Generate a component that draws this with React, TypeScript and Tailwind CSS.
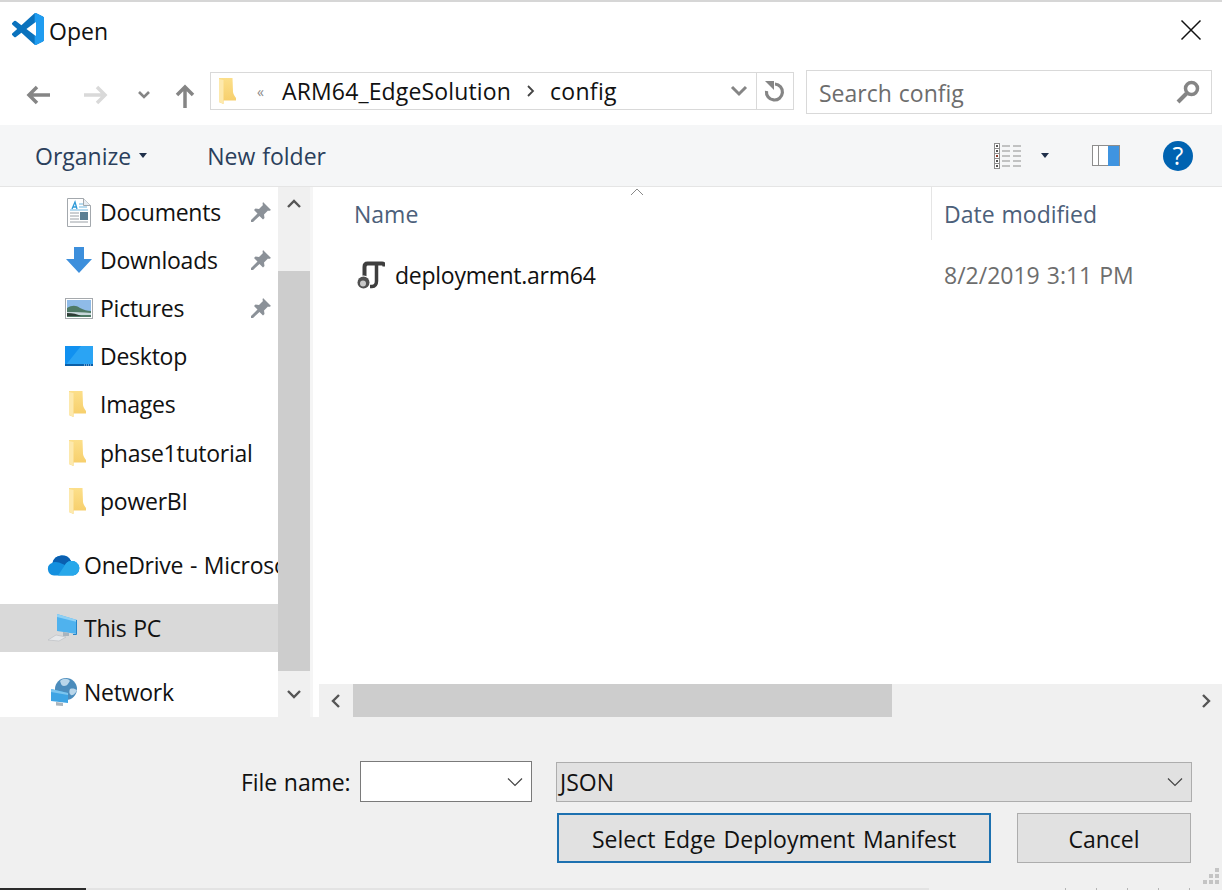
import React from 'react';

const font = { fontFamily: '"Open Sans", "Noto Sans", sans-serif' };

function VsCodeLogo() {
  const d =
    'M23.15 2.587L18.21.21a1.494 1.494 0 0 0-1.705.29l-9.46 8.63-4.12-3.128a.999.999 0 0 0-1.276.057L.327 7.261A1 1 0 0 0 .326 8.74L3.899 12 .326 15.26a1 1 0 0 0 .001 1.479L1.65 17.94a.999.999 0 0 0 1.276.057l4.12-3.128 9.46 8.63a1.492 1.492 0 0 0 1.704.29l4.942-2.377A1.5 1.5 0 0 0 24 20.06V3.939a1.5 1.5 0 0 0-.85-1.352zm-5.146 14.861L10.826 12l7.178-5.448v10.896z';
  return (
    <svg width="32" height="32" viewBox="0 0 24 24" className="shrink-0">
      <defs>
        <clipPath id="vs-right">
          <path d="M17 0h7v24h-7z" />
        </clipPath>
      </defs>
      <path d={d} fill="#0a72bd" />
      <path d={d} fill="#1f9cf0" clipPath="url(#vs-right)" />
    </svg>
  );
}

function Folder() {
  return (
    <svg width="18" height="26" viewBox="0 0 18 26" className="shrink-0">
      <defs>
        <linearGradient id="folder-body" x1="0" y1="0" x2="0" y2="1">
          <stop offset="0" stopColor="#fcdf8a" />
          <stop offset="1" stopColor="#f6cd68" />
        </linearGradient>
      </defs>
      <path d="M1 0h13.500l.5 14c.3 2 1.500 4 3 6v2.500H5.500V26L1 24z" fill="url(#folder-body)" />
      <path d="M1 1l4.500 1v24L1 24z" fill="#fde9ad" />
    </svg>
  );
}

function Pin() {
  return (
    <svg width="22" height="22" viewBox="0 0 22 22">
      <path d="M13 1l8 8-2 1-1-.5-4 4 .5 3.500-1.500 1.500-3.500-3.500L3 21H1v-2l6.500-6.500L4 9l1.500-1.500 3.500.5 4-4L12.500 3z" fill="#8b9198" />
    </svg>
  );
}

function DocumentsIcon() {
  return (
    <svg width="24" height="29" viewBox="0 0 24 29">
      <path d="M.5.5h16l7 7v21H.5z" fill="#fff" stroke="#a3a8ad" />
      <path d="M16.500.5v7h7" fill="#e8edf2" stroke="#a3a8ad" />
      <path d="M5 11l3-7 2 7M6 9h3" stroke="#2f9ad8" strokeWidth="1.300" fill="none" />
      <path d="M12 6h4M12 9h8M3 12h18" stroke="#6fb6e0" strokeWidth="1.200" />
      <path d="M3 15h9M3 18h9M3 21h9M3 24h18" stroke="#9aa0a6" />
      <path d="M13 14h8v8h-8z" fill="#5a7f94" />
    </svg>
  );
}

function DownloadsIcon() {
  return (
    <svg width="26" height="26" viewBox="0 0 26 26">
      <path d="M8 0h10v12h8L13 26 0 12h8z" fill="#3d8fdc" />
    </svg>
  );
}

function PicturesIcon() {
  return (
    <svg width="28" height="21" viewBox="0 0 28 21">
      <rect x="0.5" y="0.500" width="27" height="20" fill="#fff" stroke="#a5a9ad" />
      <rect x="2" y="2" width="24" height="17" fill="#8fbbe8" />
      <path d="M2 10c5-3 9-3 13 0 4 2 7 3 11 3v6H2z" fill="#4f7a66" />
      <path d="M2 14c8 0 16 0 24 1v2H2z" fill="#c8d8dc" />
      <path d="M2 15c6 0 10 1 14 3H2z" fill="#2e3d36" />
    </svg>
  );
}

function DesktopIcon() {
  return (
    <svg width="28" height="20" viewBox="0 0 28 20">
      <rect width="28" height="20" fill="#1191f0" />
      <path d="M0 20L16 0h12v18H0z" fill="#2aa4f4" />
      <rect y="18" width="28" height="2" fill="#0a5fa8" />
      <path d="M19 19h8" stroke="#cfe6f8" strokeDasharray="1 1" />
    </svg>
  );
}

function OneDriveIcon() {
  return (
    <svg width="33" height="22" viewBox="0 0 33 22">
      <path d="M7 21.500A6.500 6.500 0 0 1 5.500 8.800 10 10 0 0 1 24 7a7.300 7.300 0 0 1 2 14.500z" fill="#1490df" />
      <path d="M5.500 8.800A10 10 0 0 1 24 7c-3 0-5 2-6 4l-6-2.500c-3-1-5.500-.5-6.500.3z" fill="#0a5fb0" />
      <path d="M11 21.500h15A7.300 7.300 0 0 0 24 7c-3 0-5 2-6 4z" fill="#28a8ea" />
    </svg>
  );
}

function ThisPcIcon() {
  return (
    <svg width="32" height="28" viewBox="0 0 32 28">
      <path d="M10 0l20 6v14l-20-3z" fill="#4fb2ee" />
      <path d="M10 0l20 6v2L10 3z" fill="#8fd1f5" />
      <path d="M29.500 6v14.500H26" stroke="#2584c9" fill="none" />
      <path d="M16 18l6 1v3h-6z" fill="#a9b4bd" />
      <path d="M1 26l8-5 10 2-7 4z" fill="#e6e8ea" stroke="#b0b5ba" strokeWidth="0.500" />
    </svg>
  );
}

function NetworkIcon() {
  return (
    <svg width="28" height="29" viewBox="0 0 28 29">
      <circle cx="16" cy="11" r="11" fill="#4b8cbc" />
      <path d="M10 3c3-3 8-3 10 0-2 2-2 5-6 5-3 0-3-3-4-5zM20 11c3-1 5 0 7 1-1 3-4 6-6 5s-2-4-1-6z" fill="#b9d6ea" />
      <path d="M1 11l17 4v10l-17-2z" fill="#3ea4e4" />
      <path d="M1 11l17 4v2L1 14z" fill="#7cc5ef" />
      <path d="M6 24l7 1v3l-7-.500z" fill="#a9b4bd" />
    </svg>
  );
}

function ScriptIcon() {
  return (
    <svg width="28" height="29" viewBox="0 0 28 29">
      <path d="M7.500 18V6c0-2 1-3.500 3-3.500H25c1.500 0 2.500 1 2.500 3" fill="none" stroke="#3e3e3e" strokeWidth="4" />
      <path d="M19.500 4v16c0 3-1.500 5.500-4.500 5.500h-2" fill="none" stroke="#3e3e3e" strokeWidth="3.500" />
      <circle cx="6.500" cy="21.500" r="7" fill="#fff" />
      <circle cx="6.500" cy="21.500" r="6" fill="#505050" />
      <circle cx="6" cy="22.500" r="3" fill="#c9c9c9" />
    </svg>
  );
}

function Chevron({ dir }: { dir: 'up' | 'down' | 'left' | 'right' }) {
  const paths = {
    up: 'M2 10l6-6 6 6',
    down: 'M2 5l6 6 6-6',
    left: 'M11 2L5 8l6 6',
    right: 'M5 2l6 6-6 6',
  };
  return (
    <svg width="16" height="16" viewBox="0 0 16 16">
      <path d={paths[dir]} fill="none" stroke="#555" strokeWidth="2.400" />
    </svg>
  );
}

function Thin() {
  return (
    <svg width="16" height="10" viewBox="0 0 16 10">
      <path d="M1 1.500l7 7 7-7" fill="none" stroke="#444" strokeWidth="1.200" />
    </svg>
  );
}

function Caret({ color = '#1f2f4a' }: { color?: string }) {
  return (
    <svg width="8" height="5" viewBox="0 0 8 5">
      <path d="M0 0h8L4 5z" fill={color} />
    </svg>
  );
}

function NavRow({
  icon,
  label,
  pin,
  wide,
  selected,
  className,
}: {
  icon: React.ReactNode;
  label: string;
  pin?: boolean;
  wide?: boolean;
  selected?: boolean;
  className?: string;
}) {
  return (
    <div className={`flex h-12 shrink-0 items-center ${selected ? 'bg-[#d9d9d9]' : ''} ${wide ? 'pl-[47px]' : 'pl-[64px]'} ${className ?? ''}`}>
      <div className={`flex shrink-0 items-center justify-center ${wide ? 'w-[34px]' : 'w-[29px]'}`}>{icon}</div>
      <span className={`whitespace-nowrap tracking-[-0.25px] ${wide ? 'ml-[3px]' : 'ml-[7px]'}`}>{label}</span>
      {pin && (
        <div className="ml-auto mr-[6px]">
          <Pin />
        </div>
      )}
    </div>
  );
}

export default function App() {
  return (
    <div className="flex h-[890px] w-[1222px] flex-col overflow-hidden bg-white text-[23px] text-[#111] [word-spacing:1px]" style={font}>
      {/* Title bar */}
      <div className="flex h-[70px] shrink-0 items-start border-t-2 border-[#d6d6d6] pl-[12px] pr-[20px] pt-[11px]">
        <VsCodeLogo />
        <span className="ml-[5px] mt-[1px]">Open</span>
        <svg width="22" height="22" viewBox="0 0 22 22" className="ml-auto mt-[6px]">
          <path d="M1.500 1.500l19 19M20.500 1.500l-19 19" stroke="#111" strokeWidth="1.500" />
        </svg>
      </div>

      {/* Address row */}
      <div className="flex h-[55px] shrink-0 items-start">
        <div className="ml-[26px] mt-[11px] flex items-center">
          <svg width="24" height="20" viewBox="0 0 24 20">
            <path d="M11 2L3 10l8 8M3 10h21" fill="none" stroke="#858585" strokeWidth="3.500" />
          </svg>
          <svg width="24" height="20" viewBox="0 0 24 20" className="ml-[34px]">
            <path d="M13 2l8 8-8 8M21 10H0" fill="none" stroke="#d9d9d9" strokeWidth="3.500" />
          </svg>
          <svg width="14" height="10" viewBox="0 0 14 10" className="ml-[29px]">
            <path d="M2 2l5 5 5-5" fill="none" stroke="#858585" strokeWidth="2.600" />
          </svg>
          <svg width="20" height="24" viewBox="0 0 20 24" className="ml-[24px] mt-[3px]">
            <path d="M2 11l8-8 8 8M10 3v21" fill="none" stroke="#858585" strokeWidth="3.500" />
          </svg>
        </div>
        <div className="ml-[15px] mt-[2px] flex h-[38px] w-[584px] items-center border border-[#d9d9d9]">
          <div className="ml-[7px] flex w-[19px]">
            <Folder />
          </div>
          <span className="ml-[20px] text-[14px] text-[#8a8a8a]">«</span>
          <span className="ml-[18px] pt-[1px] tracking-[0.15px]">ARM64_EdgeSolution</span>
          <svg width="10" height="14" viewBox="0 0 10 14" className="ml-[15px]">
            <path d="M2 2l5 5-5 5" fill="none" stroke="#444" strokeWidth="1.800" />
          </svg>
          <span className="ml-[14px] pt-[1px] tracking-[0.3px]">config</span>
          <svg width="18" height="12" viewBox="0 0 18 12" className="ml-auto mr-[8px]">
            <path d="M2 2l7 7 7-7" fill="none" stroke="#858585" strokeWidth="3" />
          </svg>
          <div className="flex h-full w-[37px] items-center justify-center border-l border-[#d9d9d9]">
            <svg width="22" height="22" viewBox="0 0 22 22">
              <path d="M11 4a8 8 0 1 1-8.500 7" fill="none" stroke="#858585" strokeWidth="3.200" />
              <path d="M1 1h9v9z" fill="#858585" />
            </svg>
          </div>
        </div>
        <div className="ml-[12px] flex h-[44px] w-[406px] shrink-0 items-center justify-between border border-[#d9d9d9] pl-[12px] pr-[11px] text-[#6d6d6d]">
          <span className="pt-[2px]">Search config</span>
          <svg width="24" height="24" viewBox="0 0 24 24">
            <circle cx="15.500" cy="8.500" r="6" fill="none" stroke="#858585" strokeWidth="3.500" />
            <path d="M10.500 13.500L2 22" stroke="#858585" strokeWidth="4" />
          </svg>
        </div>
      </div>

      {/* Command bar */}
      <div className="flex h-[62px] shrink-0 items-center border-b border-[#e5e5e5] bg-[#f5f6f7] text-[#2b3f5c]">
        <span className="ml-[35px] pt-[2px]">Organize</span>
        <div className="ml-[8px]">
          <Caret />
        </div>
        <span className="ml-[60px] pt-[2px]">New folder</span>
        <svg width="28" height="26" viewBox="0 0 28 26" className="ml-auto">
          {[1, 6, 11, 16, 21].map(y => (
            <g key={y}>
              <rect x="0.500" y={y - 0.500} width="5" height="5" fill="#fff" stroke="#8d8d8d" />
              <rect x="2" y={y + 1} width="2" height="2" fill={y === 11 ? '#8a3b2c' : '#555'} />
              <path d={`M8 ${y + 2}h8M19 ${y + 2}h8`} stroke="#8d8d8d" strokeWidth="1.200" />
            </g>
          ))}
        </svg>
        <div className="ml-[19px]">
          <Caret />
        </div>
        <svg width="28" height="22" viewBox="0 0 28 22" className="ml-[43px]">
          <rect x="0.500" y="0.500" width="27" height="20" fill="#fff" stroke="#8d8d8d" />
          <path d="M6.500 1v20" stroke="#8d8d8d" />
          <rect x="16" y="1" width="11" height="20" fill="#3f94e0" />
        </svg>
        <div className="ml-[43px] mr-[29px] flex h-[30px] w-[30px] items-center justify-center rounded-full bg-[#0063b1] text-[25px] text-white">?</div>
      </div>

      {/* Main */}
      <div className="flex h-[530px] shrink-0">
        <div className="w-[278px] shrink-0 overflow-hidden pt-[1px]">
          <NavRow icon={<DocumentsIcon />} label="Documents" pin />
          <NavRow icon={<DownloadsIcon />} label="Downloads" pin />
          <NavRow icon={<PicturesIcon />} label="Pictures" pin />
          <NavRow icon={<DesktopIcon />} label="Desktop" />
          <NavRow icon={<div className="-ml-[3px]"><Folder /></div>} label="Images" />
          <NavRow icon={<div className="-ml-[3px]"><Folder /></div>} label="phase1tutorial" className="mt-[1px]" />
          <NavRow icon={<div className="-ml-[3px]"><Folder /></div>} label="powerBI" />
          <NavRow icon={<div className="-ml-[2px]"><OneDriveIcon /></div>} label="OneDrive - Microsoft" wide className="mt-[16px]" />
          <NavRow icon={<div className="-ml-[3px]"><ThisPcIcon /></div>} label="This PC" wide selected className="mt-[15px]" />
          <NavRow icon={<NetworkIcon />} label="Network" wide className="mt-[16px]" />
        </div>

        <div className="flex w-[32px] shrink-0 flex-col bg-[#f0f0f0]">
          <div className="flex h-[84px] justify-center pt-[10px]">
            <Chevron dir="up" />
          </div>
          <div className="h-[400px] bg-[#cdcdcd]" />
          <div className="flex flex-1 items-center justify-center">
            <Chevron dir="down" />
          </div>
        </div>

        <div className="relative flex min-w-0 flex-1 flex-col border-l-[3px] border-[#f5f5f5] pl-[6px]">
          <svg width="14" height="8" viewBox="0 0 14 8" className="absolute left-[317px] top-[1px]">
            <path d="M1 7l6-6 6 6" fill="none" stroke="#888" />
          </svg>
          <div className="flex h-[53px] shrink-0 text-[#4c607a]">
            <span className="ml-[35px] w-[577px] pt-[10px]">Name</span>
            <div className="h-full border-l border-[#e5e5e5] pl-[12px] pt-[10px]">Date modified</div>
          </div>
          <div className="flex h-[70px] shrink-0 items-center">
            <div className="ml-[38px] flex w-[28px]">
              <ScriptIcon />
            </div>
            <span className="ml-[10px] w-[549px] tracking-[-0.25px] text-[#111]">deployment.arm64</span>
            <span className="text-[#6d6d6d]">8/2/2019 3:11 PM</span>
          </div>
          <div className="mt-auto flex h-[33px] items-center bg-[#f0f0f0]">
            <div className="flex w-[34px] justify-center">
              <Chevron dir="left" />
            </div>
            <div className="h-full w-[539px] bg-[#cdcdcd]" />
            <div className="ml-auto flex w-[32px] justify-center">
              <Chevron dir="right" />
            </div>
          </div>
        </div>
      </div>

      {/* Footer */}
      <div className="relative flex-1 bg-[#f0f0f0]">
        <div className="ml-[241px] mt-[44px] flex items-center">
          <span className="w-[119px] pt-[2px] tracking-[-0.1px]">File name:</span>
          <div className="flex h-[41px] w-[172px] items-center justify-end border border-[#7a7a7a] bg-white pr-[8px]">
            <Thin />
          </div>
          <div className="ml-[24px] flex h-[40px] w-[636px] items-center justify-between border border-[#adadad] bg-[#e1e1e1] pl-[3px] pr-[8px]">
            <span className="pt-[2px]">JSON</span>
            <Thin />
          </div>
        </div>
        <div className="ml-[557px] mt-[11px] flex">
          <button className="flex h-[50px] w-[434px] items-center justify-center border-2 border-[#1d71b0] bg-[#e1e1e1] pt-[2px] [word-spacing:2px]">Select Edge Deployment Manifest</button>
          <button className="ml-[26px] flex h-[50px] w-[174px] items-center justify-center border border-[#adadad] bg-[#e1e1e1] pt-[2px]">Cancel</button>
        </div>
        <svg width="16" height="16" viewBox="0 0 16 16" className="absolute bottom-[6px] right-[3px]">
          <path d="M12 0h4v4h-4zM6 6h4v4H6zM12 6h4v4h-4zM0 12h4v4H0zM6 12h4v4H6zM12 12h4v4h-4z" fill="#c4c4c4" />
        </svg>
        {/* window edge showing under the dialog */}
        <div className="absolute bottom-0 left-0 flex h-[2px] w-full">
          <div className="w-[86px] bg-[#2b2b2b]" />
          <div className="w-[843px] bg-[#e3e3e3]" />
          <div className="ml-[136px] flex w-[125px] justify-between">
            {[0, 1, 2, 3, 4].map(i => (
              <div key={i} className="w-[1px] bg-[#b5b5b5]" />
            ))}
          </div>
        </div>
      </div>
    </div>
  );
}
